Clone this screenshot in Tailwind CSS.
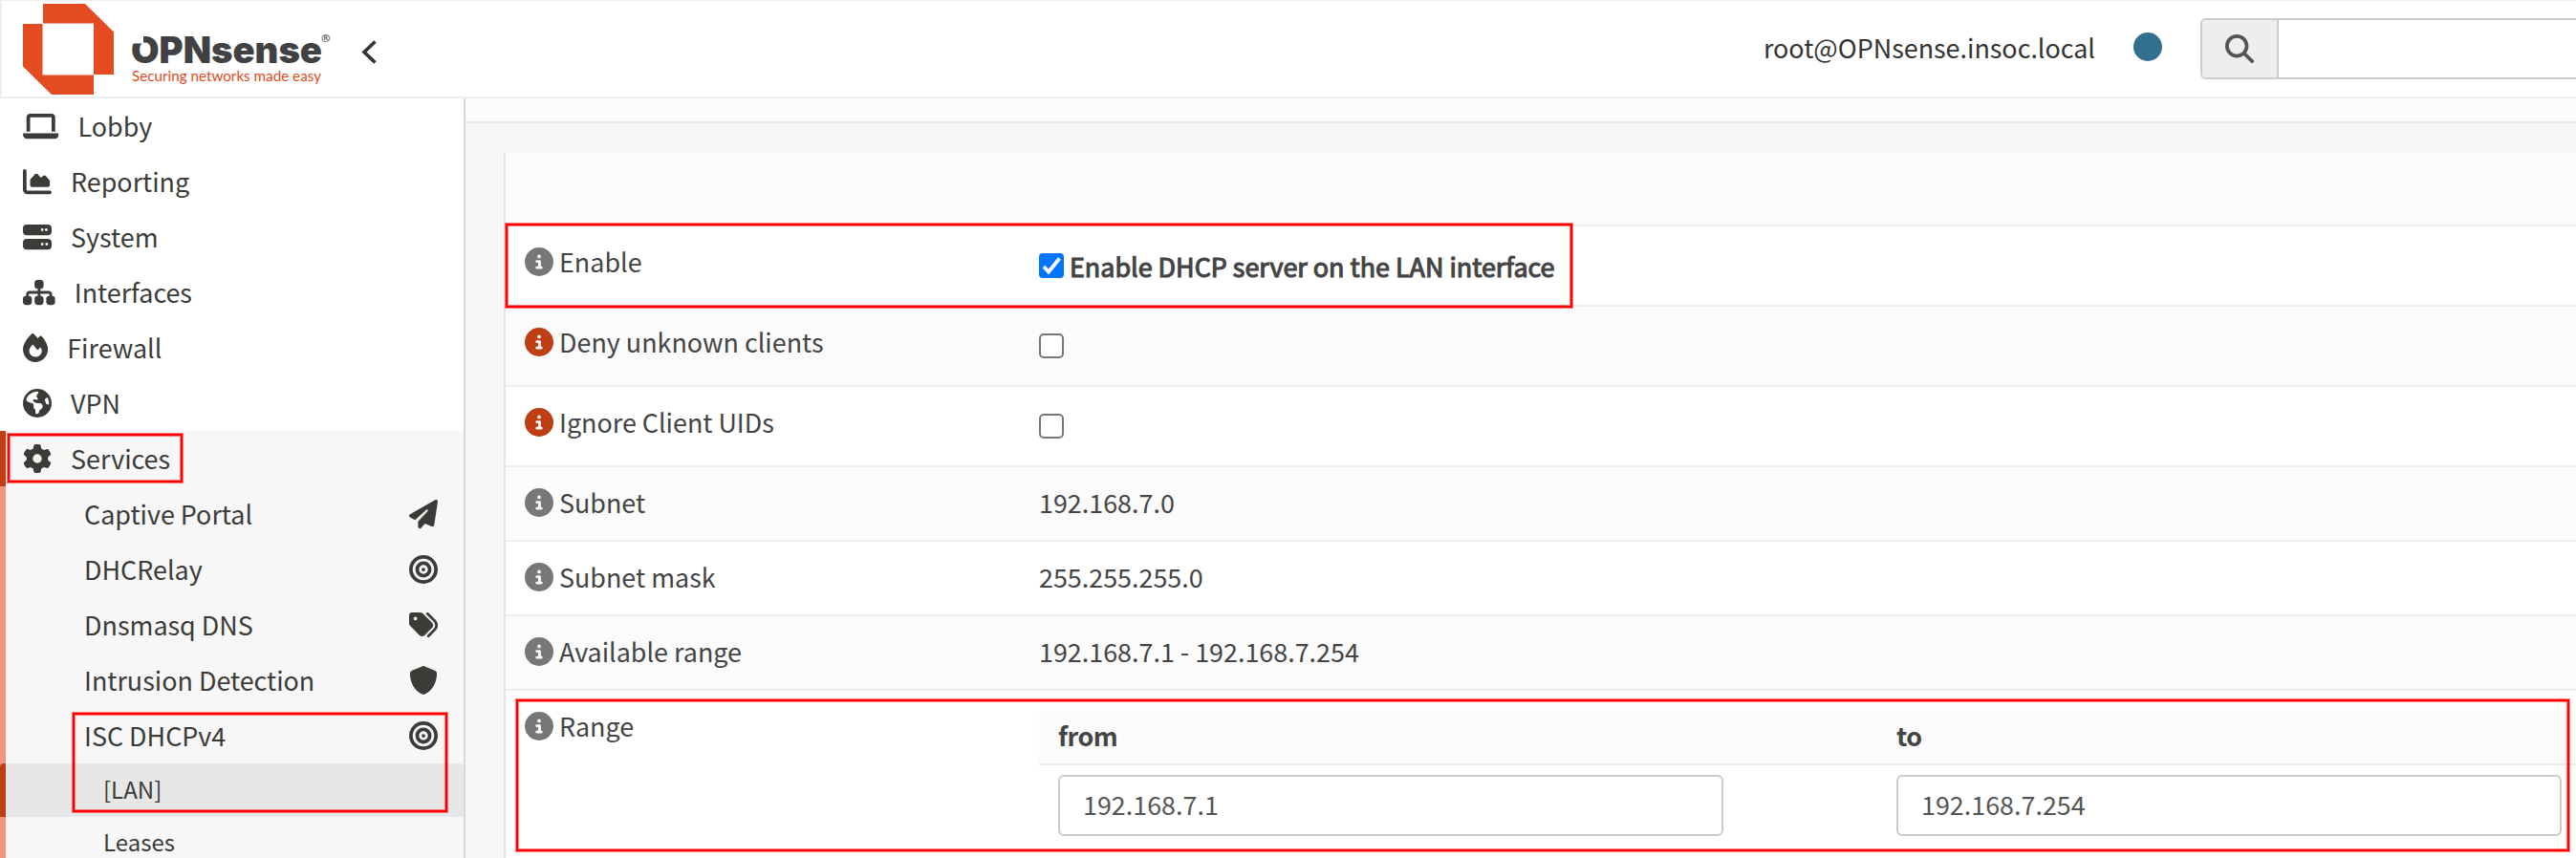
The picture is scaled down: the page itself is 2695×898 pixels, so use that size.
<!DOCTYPE html>
<html lang="en">
<head>
<meta charset="utf-8">
<title>OPNsense</title>
<script src="https://cdn.jsdelivr.net/npm/@tailwindcss/browser@4"></script>
</head>
<body class="relative w-[2695px] h-[898px] overflow-hidden flex flex-col bg-[#f6f6f6] font-['Noto_Sans_CJK_SC',sans-serif] text-[26.9px] leading-[38px] text-[#3b3b38]">
<svg class="hidden">
  <symbol id="laptop" viewBox="0 0 640 512"><path d="M128 32C92.7 32 64 60.7 64 96V352h64V96H512V352h64V96c0-35.3-28.7-64-64-64H128zM19.2 384C8.6 384 0 392.6 0 403.2C0 445.6 34.4 480 76.8 480H563.2c42.4 0 76.8-34.4 76.8-76.8c0-10.6-8.6-19.2-19.2-19.2H19.2z"/></symbol>
  <symbol id="area" viewBox="0 0 512 512"><path d="M64 64c0-17.7-14.3-32-32-32S0 46.3 0 64V400c0 44.2 35.8 80 80 80H480c17.7 0 32-14.3 32-32s-14.3-32-32-32H80c-8.8 0-16-7.2-16-16V64zm96 288H448c17.7 0 32-14.3 32-32V251.8c0-7.6-2.7-15-7.7-20.8l-65.8-76.8c-12.1-14.2-33.7-15-46.9-1.8l-21 21c-10 10-26.4 9.2-35.4-1.6l-39.2-47c-12.6-15.1-35.7-15.4-48.7-.6L135.9 215c-5.1 5.8-7.9 13.3-7.9 21.1v84c0 17.7 14.3 32 32 32z"/></symbol>
  <symbol id="server" viewBox="0 0 512 512"><path d="M64 32C28.7 32 0 60.7 0 96v64c0 35.3 28.7 64 64 64H448c35.3 0 64-28.7 64-64V96c0-35.3-28.7-64-64-64H64zm280 72a24 24 0 1 1 0 48 24 24 0 1 1 0-48zm48 24a24 24 0 1 1 48 0 24 24 0 1 1 -48 0zM64 288c-35.3 0-64 28.7-64 64v64c0 35.3 28.7 64 64 64H448c35.3 0 64-28.7 64-64V352c0-35.3-28.7-64-64-64H64zm280 72a24 24 0 1 1 0 48 24 24 0 1 1 0-48zm56 24a24 24 0 1 1 48 0 24 24 0 1 1 -48 0z"/></symbol>
  <symbol id="sitemap" viewBox="0 0 576 512"><path d="M208 80c0-26.5 21.5-48 48-48h64c26.5 0 48 21.5 48 48v64c0 26.5-21.5 48-48 48h-8v40H464c30.9 0 56 25.1 56 56v32h8c26.5 0 48 21.5 48 48v64c0 26.5-21.5 48-48 48H464c-26.5 0-48-21.5-48-48V368c0-26.5 21.5-48 48-48h8V288c0-4.4-3.6-8-8-8H312v40h8c26.5 0 48 21.5 48 48v64c0 26.5-21.5 48-48 48H256c-26.5 0-48-21.5-48-48V368c0-26.5 21.5-48 48-48h8V280H112c-4.4 0-8 3.6-8 8v32h8c26.5 0 48 21.5 48 48v64c0 26.5-21.5 48-48 48H48c-26.5 0-48-21.5-48-48V368c0-26.5 21.5-48 48-48h8V288c0-30.9 25.1-56 56-56H264V192h-8c-26.5 0-48-21.5-48-48V80z"/></symbol>
  <symbol id="fire" viewBox="0 0 448 512"><path d="M159.3 5.4c7.8-7.3 19.9-7.2 27.7 .1c27.6 25.9 53.5 53.8 77.7 84c11-14.4 23.5-30.1 37-42.9c7.9-7.4 20.1-7.4 28 .1c34.6 33 63.9 76.6 84.5 118c20.3 40.8 33.8 82.5 33.8 111.9C448 404.2 348.2 512 224 512C98.4 512 0 404.1 0 276.5c0-38.4 17.8-85.3 45.4-131.7C73.3 97.7 112.7 48.6 159.3 5.4zM225.7 416c25.3 0 47.7-7 68.8-21c42.1-29.4 53.4-88.2 28.1-134.4c-4.5-9-16-9.6-22.5-2l-25.2 29.3c-6.6 7.6-18.5 7.4-24.7-.5c-16.5-21-46-58.5-62.8-79.8c-6.3-8-18.3-8.1-24.7-.1c-33.8 42.5-50.8 69.3-50.8 99.4C112 375.4 162.6 416 225.7 416z"/></symbol>
  <symbol id="globe" viewBox="0 0 512 512"><path d="M57.7 193l9.4 16.4c8.3 14.5 21.9 25.2 38 29.8L163 255.7c17.2 4.9 29 20.6 29 38.5v39.9c0 11 6.2 21 16 25.9s16 14.9 16 25.9v39c0 15.6 14.9 26.9 29.9 22.6c16.1-4.6 28.6-17.5 32.7-33.8l2.8-11.2c4.2-16.9 15.2-31.4 30.3-40l8.1-4.6c15-8.5 24.2-24.5 24.2-41.7v-8.3c0-12.7-5.1-24.9-14.1-33.9l-3.9-3.9c-9-9-21.2-14.1-33.9-14.1H257c-11.1 0-22.1-2.9-31.8-8.4l-34.5-19.7c-4.3-2.5-7.6-6.5-9.2-11.2c-3.2-9.6 1.1-20 10.2-24.5l5.9-3c6.6-3.3 14.3-3.9 21.3-1.5l23.2 7.7c8.2 2.7 17.2-.4 21.9-7.5c4.7-7 4.2-16.3-1.2-22.8l-13.6-16.3c-10-12-9.9-29.5 .3-41.3l15.7-18.3c8.8-10.3 10.2-25 3.5-36.7l-2.4-4.2c-3.5-.2-6.9-.3-10.4-.3C163.1 48 84.4 108.9 57.7 193zM464 256c0-36.8-9.6-71.4-26.4-101.5L412 164.8c-15.7 6.3-23.8 23.8-18.5 39.8l16.9 50.7c3.5 10.4 12 18.3 22.6 20.9l29.1 7.3c1.2-9 1.8-18.2 1.8-27.5zM0 256a256 256 0 1 1 512 0A256 256 0 1 1 0 256z"/></symbol>
  <symbol id="gear" viewBox="0 0 512 512"><path d="M495.9 166.6c3.2 8.7 .5 18.4-6.4 24.6l-43.3 39.4c1.1 8.3 1.7 16.8 1.7 25.4s-.6 17.1-1.7 25.4l43.3 39.4c6.9 6.2 9.6 15.9 6.4 24.6c-4.4 11.9-9.7 23.3-15.8 34.3l-4.7 8.1c-6.6 11-14 21.4-22.1 31.2c-5.9 7.2-15.7 9.6-24.5 6.8l-55.7-17.7c-13.4 10.3-28.2 18.9-44 25.4l-12.5 57.1c-2 9.1-9 16.3-18.2 17.8c-13.8 2.3-28 3.5-42.5 3.5s-28.7-1.2-42.5-3.5c-9.2-1.5-16.2-8.7-18.2-17.8l-12.5-57.1c-15.8-6.5-30.6-15.1-44-25.4L83.1 425.9c-8.8 2.8-18.6 .3-24.5-6.8c-8.1-9.8-15.5-20.2-22.1-31.2l-4.7-8.1c-6.1-11-11.4-22.4-15.8-34.3c-3.2-8.7-.5-18.4 6.4-24.6l43.3-39.4C64.6 273.1 64 264.6 64 256s.6-17.1 1.7-25.4L22.4 191.2c-6.9-6.2-9.6-15.9-6.4-24.6c4.4-11.9 9.7-23.3 15.8-34.3l4.7-8.1c6.6-11 14-21.4 22.1-31.2c5.9-7.2 15.7-9.6 24.5-6.8l55.7 17.7c13.4-10.3 28.2-18.9 44-25.4l12.5-57.1c2-9.1 9-16.3 18.2-17.8C227.3 1.2 241.5 0 256 0s28.7 1.2 42.5 3.5c9.2 1.5 16.2 8.7 18.2 17.8l12.5 57.1c15.8 6.5 30.6 15.1 44 25.4l55.7-17.7c8.8-2.8 18.6-.3 24.5 6.8c8.1 9.8 15.5 20.2 22.1 31.2l4.7 8.1c6.1 11 11.4 22.4 15.8 34.3zM256 336a80 80 0 1 0 0-160 80 80 0 1 0 0 160z"/></symbol>
  <symbol id="plane" viewBox="0 0 512 512"><path d="M498.1 5.6c10.1 7 15.4 19.1 13.5 31.2l-64 416c-1.5 9.7-7.4 18.2-16 23s-18.9 5.4-28 1.6L284 427.7l-68.5 74.1c-8.9 9.7-22.9 12.9-35.2 8.1S160 493.2 160 480V396.4c0-4 1.5-7.8 4.2-10.7L331.8 202.8c5.8-6.3 5.6-16-.4-22s-15.7-6.4-22-.7L106 360.8 17.7 316.6C7.1 311.3 .3 300.7 0 288.9s5.9-22.8 16.1-28.7l448-256c10.7-6.1 23.9-5.5 34 1.4z"/></symbol>
  <symbol id="bullseye" viewBox="0 0 512 512"><path d="M448 256A192 192 0 1 0 64 256a192 192 0 1 0 384 0zM0 256a256 256 0 1 1 512 0A256 256 0 1 1 0 256zm256 80a80 80 0 1 0 0-160 80 80 0 1 0 0 160zm0-224a144 144 0 1 1 0 288 144 144 0 1 1 0-288zM224 256a32 32 0 1 1 64 0 32 32 0 1 1 -64 0z"/></symbol>
  <symbol id="tags" viewBox="0 0 512 512"><path d="M345 39.1L472.8 168.4c52.4 53 52.4 138.2 0 191.2L360.8 472.9c-9.3 9.4-24.5 9.5-33.9 .2s-9.5-24.5-.2-33.9L438.6 325.9c33.9-34.3 33.9-89.4 0-123.7L310.9 72.9c-9.3-9.4-9.2-24.6 .2-33.9s24.6-9.2 33.9 .2zM0 229.5V80C0 53.5 21.5 32 48 32H197.5c17 0 33.3 6.7 45.3 18.7l168 168c25 25 25 65.5 0 90.5L277.3 442.7c-25 25-65.5 25-90.5 0l-168-168C6.7 262.7 0 246.5 0 229.5zM144 144a32 32 0 1 0 -64 0 32 32 0 1 0 64 0z"/></symbol>
  <symbol id="shield" viewBox="0 0 512 512"><path d="M269.4 2.9C265.2 1 260.7 0 256 0s-9.2 1-13.4 2.9L54.3 82.8c-22 9.3-38.4 31-38.3 57.2c.5 99.2 41.3 280.7 213.6 363.2c16.7 8 36.1 8 52.8 0C454.7 420.7 495.5 239.2 496 140c.1-26.2-16.3-47.9-38.3-57.2L269.4 2.9z"/></symbol>
  <symbol id="info" viewBox="0 0 512 512"><path d="M256 512A256 256 0 1 0 256 0a256 256 0 1 0 0 512zM216 336h24V272H216c-13.3 0-24-10.7-24-24s10.7-24 24-24h48c13.3 0 24 10.7 24 24v88h8c13.3 0 24 10.7 24 24s-10.7 24-24 24H216c-13.3 0-24-10.7-24-24s10.7-24 24-24zm40-208a32 32 0 1 1 0 64 32 32 0 1 1 0-64z"/></symbol>
  <symbol id="search" viewBox="0 0 512 512"><path d="M416 208c0 45.9-14.9 88.3-40 122.7L502.6 457.4c12.5 12.5 12.5 32.8 0 45.3s-32.8 12.5-45.3 0L330.7 376c-34.4 25.2-76.8 40-122.7 40C93.1 416 0 322.9 0 208S93.1 0 208 0S416 93.1 416 208zM208 352a144 144 0 1 0 0-288 144 144 0 1 0 0 288z"/></symbol>
</svg>

<header class="h-[103px] shrink-0 flex items-start bg-white border-t border-l-2 border-b-2 border-[#eeeeee]">
  <svg class="w-[420px] h-[100px] shrink-0" viewBox="2 1 420 100">
    <g fill="#e44b21">
      <path d="M45 4H89L119 33.500V78H98V24.500H45z"/>
      <path d="M24 25H44.500V78.500H98V99H54L24 69.500z"/>
    </g>
    <text x="137" y="66" textLength="200" lengthAdjust="spacingAndGlyphs" font-family="Inter" font-weight="900" font-size="38" fill="#414143">OPNsense</text>
    <path d="M136 36H150V45.500H136z" fill="#fff"/>
    <text x="336" y="44" font-family="Open Sans" font-size="11.500" font-weight="600" fill="#414143">®</text>
    <text x="138" y="85" textLength="198" lengthAdjust="spacingAndGlyphs" font-family="Lato" font-size="14.500" fill="#e44b21">Securing networks made easy</text>
    <path d="M392.500 43.500L381 54.500L392.500 65.500" fill="none" stroke="#333" stroke-width="3.600"/>
  </svg>
  <div class="ml-auto flex items-start">
    <span class="mt-[30px] mr-[40px] text-[#333]">root@OPNsense.insoc.local</span>
    <span class="mt-[33px] mr-[40px] size-[30px] rounded-full bg-[#31708f]"></span>
    <div class="mt-[18px] w-[393px] h-[64px] flex border-2 border-r-0 border-[#ccc] rounded-l-[6px] overflow-hidden">
      <div class="w-[80px] shrink-0 bg-[#eee] border-r-2 border-[#ccc] flex items-center justify-center"><svg class="size-[30px] fill-[#555]"><use href="#search"/></svg></div>
    </div>
  </div>
</header>

<div class="flex-1 min-h-0 flex">
  <nav class="w-[487px] shrink-0 bg-white border-r-2 border-[#d8d8d8] fill-[#3b3b38] overflow-hidden">
    <a class="h-[58px] pl-[24px] flex items-center gap-[20px]"><svg class="w-[37.5px] h-[30px]"><use href="#laptop"/></svg><span>Lobby</span></a>
    <a class="h-[58px] pl-[24px] flex items-center gap-[20px]"><svg class="size-[30px]"><use href="#area"/></svg><span>Reporting</span></a>
    <a class="h-[58px] pl-[24px] flex items-center gap-[20px]"><svg class="size-[30px]"><use href="#server"/></svg><span>System</span></a>
    <a class="h-[58px] pl-[24px] flex items-center gap-[20px]"><svg class="w-[33.75px] h-[30px]"><use href="#sitemap"/></svg><span>Interfaces</span></a>
    <a class="h-[58px] pl-[24px] flex items-center gap-[20px]"><svg class="w-[26.25px] h-[30px]"><use href="#fire"/></svg><span>Firewall</span></a>
    <a class="h-[58px] pl-[24px] flex items-center gap-[20px]"><svg class="size-[30px]"><use href="#globe"/></svg><span>VPN</span></a>
    <a class="h-[58px] pl-[18px] flex items-center gap-[20px] bg-[#f7f7f7] border-l-6 border-[#c03e14]"><svg class="size-[30px]"><use href="#gear"/></svg><span>Services</span></a>
    <div class="bg-[#f7f7f7] shadow-[inset_6px_0_0_#f1967d]">
      <a class="h-[58px] pl-[88px] pr-[27.5px] flex items-center justify-between"><span>Captive Portal</span><svg class="size-[30px]"><use href="#plane"/></svg></a>
      <a class="h-[58px] pl-[88px] pr-[27.5px] flex items-center justify-between"><span>DHCRelay</span><svg class="size-[30px]"><use href="#bullseye"/></svg></a>
      <a class="h-[58px] pl-[88px] pr-[27.5px] flex items-center justify-between"><span>Dnsmasq DNS</span><svg class="size-[30px]"><use href="#tags"/></svg></a>
      <a class="h-[58px] pl-[88px] pr-[27.5px] flex items-center justify-between"><span>Intrusion Detection</span><svg class="size-[30px]"><use href="#shield"/></svg></a>
      <a class="h-[58px] pl-[88px] pr-[27.5px] flex items-center justify-between"><span>ISC DHCPv4</span><svg class="size-[30px]"><use href="#bullseye"/></svg></a>
      <a class="h-[56px] pl-[102px] flex items-center bg-[#e7e7e7] border-l-6 border-[#c03e14] rounded-t-[4px] text-[24px]"><span class="pb-[2px]">[LAN]</span></a>
      <a class="h-[54px] pl-[108px] flex items-center text-[24px]"><span class="pb-[3px]">Leases</span></a>
    </div>
  </nav>

  <main class="flex-1 min-w-0 flex flex-col text-[#444]">
    <div class="h-[26px] shrink-0 bg-[#fbfbfb] border-b-2 border-[#e9e9e9]"></div>
    <section class="mt-[30px] ml-[40px] flex-1 min-h-0 overflow-hidden border-l-2 border-[#e6e6e6] bg-white">
      <div class="h-[76px] bg-[#fbfbfb]"></div>
      <div class="h-[84px] flex border-t-2 border-[#ededed]">
        <div class="w-[558px] shrink-0 pl-[20px] pt-[18px] flex gap-[6px]"><svg class="mt-[4px] size-[30px] fill-[#777]"><use href="#info"/></svg><span>Enable</span></div>
        <div class="flex pt-[23px]"><svg class="mt-[5px] size-[26px]" viewBox="0 0 26 26"><rect width="26" height="26" rx="4" fill="#0075ff"/><path d="M5 14L10 19.500L21.500 5.500" fill="none" stroke="#fff" stroke-width="3.800"/></svg><strong class="ml-[6px] font-normal [-webkit-text-stroke:1.1px_#444]">Enable DHCP server on the LAN interface</strong></div>
      </div>
      <div class="h-[84px] flex border-t-2 border-[#ededed] bg-[#fbfbfb]">
        <div class="w-[558px] shrink-0 pl-[20px] pt-[18px] flex gap-[6px]"><svg class="mt-[4px] size-[30px] fill-[#c03e14]"><use href="#info"/></svg><span>Deny unknown clients</span></div>
        <span class="mt-[28px] size-[26px] rounded-[5px] border-2 border-[#767676] bg-white"></span>
      </div>
      <div class="h-[84px] flex border-t-2 border-[#ededed]">
        <div class="w-[558px] shrink-0 pl-[20px] pt-[18px] flex gap-[6px]"><svg class="mt-[4px] size-[30px] fill-[#c03e14]"><use href="#info"/></svg><span>Ignore Client UIDs</span></div>
        <span class="mt-[28px] size-[26px] rounded-[5px] border-2 border-[#767676] bg-white"></span>
      </div>
      <div class="h-[78px] flex border-t-2 border-[#ededed] bg-[#fbfbfb]">
        <div class="w-[558px] shrink-0 pl-[20px] pt-[18px] flex gap-[6px]"><svg class="mt-[4px] size-[30px] fill-[#777]"><use href="#info"/></svg><span>Subnet</span></div>
        <span class="pt-[18px]">192.168.7.0</span>
      </div>
      <div class="h-[78px] flex border-t-2 border-[#ededed]">
        <div class="w-[558px] shrink-0 pl-[20px] pt-[18px] flex gap-[6px]"><svg class="mt-[4px] size-[30px] fill-[#777]"><use href="#info"/></svg><span>Subnet mask</span></div>
        <span class="pt-[18px]">255.255.255.0</span>
      </div>
      <div class="h-[78px] flex border-t-2 border-[#ededed] bg-[#fbfbfb]">
        <div class="w-[558px] shrink-0 pl-[20px] pt-[18px] flex gap-[6px]"><svg class="mt-[4px] size-[30px] fill-[#777]"><use href="#info"/></svg><span>Available range</span></div>
        <span class="pt-[18px]">192.168.7.1 - 192.168.7.254</span>
      </div>
      <div class="h-[200px] flex border-t-2 border-[#ededed]">
        <div class="w-[558px] shrink-0 pl-[20px] pt-[18px] flex gap-[6px]"><svg class="mt-[4px] size-[30px] fill-[#777]"><use href="#info"/></svg><span>Range</span></div>
        <div class="mt-[20px] w-[1608px] shrink-0">
          <div class="h-[58px] flex bg-[#fbfbfb] border-b-2 border-[#ebebeb] font-bold">
            <span class="w-[877px] pl-[20px] pt-[8px] tracking-[-0.5px]">from</span>
            <span class="pl-[20px] pt-[8px] tracking-[-0.5px]">to</span>
          </div>
          <div class="flex pl-[20px] pt-[10px] gap-[181px] text-[#555]">
            <div class="w-[696px] h-[64px] pl-[24px] pt-[10px] border-2 border-[#ccc] rounded-[6px]">192.168.7.1</div>
            <div class="w-[696px] h-[64px] pl-[24px] pt-[10px] border-2 border-[#ccc] rounded-[6px]">192.168.7.254</div>
          </div>
        </div>
      </div>
    </section>
  </main>
</div>

<!-- highlight frames laid over the page -->
<div class="absolute left-[8px] top-[454px] w-[183px] h-[51px] border-2 border-[#f00] shadow-[0_0_0_1px_rgba(255,0,0,.5),inset_0_0_0_1px_rgba(255,0,0,.5)]"></div>
<div class="absolute left-[76px] top-[746px] w-[392px] h-[104px] border-2 border-[#f00] shadow-[0_0_0_1px_rgba(255,0,0,.5),inset_0_0_0_1px_rgba(255,0,0,.5)]"></div>
<div class="absolute left-[529px] top-[234px] w-[1116px] h-[88px] border-2 border-[#f00] shadow-[0_0_0_1px_rgba(255,0,0,.5),inset_0_0_0_1px_rgba(255,0,0,.5)]"></div>
<div class="absolute left-[540px] top-[732px] w-[2148px] h-[159px] border-2 border-[#f00] shadow-[0_0_0_1px_rgba(255,0,0,.5),inset_0_0_0_1px_rgba(255,0,0,.5)]"></div>
</body>
</html>
